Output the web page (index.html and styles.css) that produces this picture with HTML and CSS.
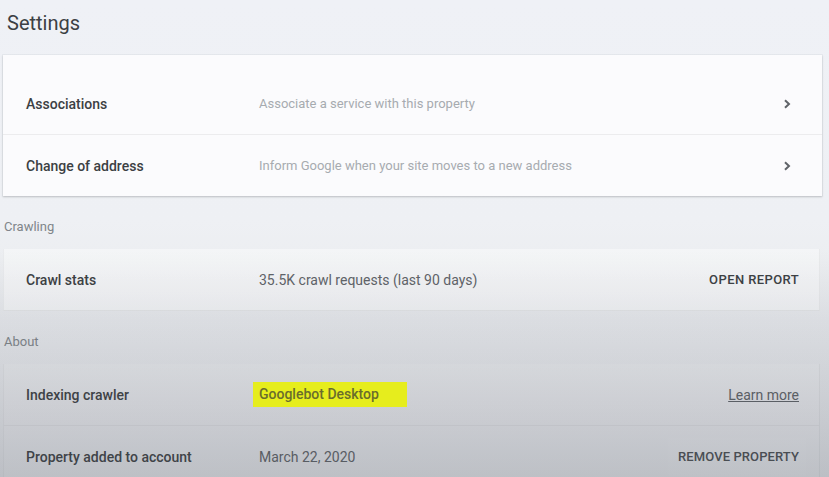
FILE: index.html
```html
<!DOCTYPE html>
<html lang="en">
<head>
<meta charset="utf-8">
<title>Settings</title>
<link rel="stylesheet" href="styles.css">
</head>
<body>
<main class="page">
  <h1 class="title">Settings</h1>

  <section class="card card-main">
    <div class="row">
      <div class="label">Associations</div>
      <div class="value muted">Associate a service with this property</div>
      <div class="action">
        <svg class="chev" width="8" height="10" viewBox="0 0 8 10"><path d="M2 1.2 L6 5 L2 8.8" fill="none" stroke="#5f6368" stroke-width="2"/></svg>
      </div>
    </div>
    <div class="row divided">
      <div class="label">Change of address</div>
      <div class="value muted">Inform Google when your site moves to a new address</div>
      <div class="action">
        <svg class="chev" width="8" height="10" viewBox="0 0 8 10"><path d="M2 1.2 L6 5 L2 8.8" fill="none" stroke="#5f6368" stroke-width="2"/></svg>
      </div>
    </div>
  </section>

  <h2 class="section-label">Crawling</h2>
  <section class="card card-soft">
    <div class="row">
      <div class="label">Crawl stats</div>
      <div class="value">35.5K crawl requests (last 90 days)</div>
      <div class="action"><span class="btn-text">OPEN REPORT</span></div>
    </div>
  </section>

  <h2 class="section-label">About</h2>
  <section class="card card-soft card-about">
    <div class="row">
      <div class="label">Indexing crawler</div>
      <div class="value"><span class="highlight">Googlebot Desktop</span></div>
      <div class="action"><a class="link" href="#">Learn more</a></div>
    </div>
    <div class="row divided divided-faint">
      <div class="label">Property added to account</div>
      <div class="value">March 22, 2020</div>
      <div class="action"><span class="btn-text btn-remove">REMOVE PROPERTY</span></div>
    </div>
  </section>
</main>
</body>
</html>
```

FILE: styles.css
```css
html, body {
  margin: 0;
  padding: 0;
}

body {
  width: 829px;
  height: 477px;
  overflow: hidden;
  position: relative;
  font-family: Roboto, "Liberation Sans", Arial, sans-serif;
  color: #3c4043;
  background: linear-gradient(to bottom, #eff1f6 0px, #eef0f4 220px, #eceef1 260px, #e6e8ec 320px, #eceef2 477px);
}

/* video-like darkening that lies over the lower half of the page */
body::after {
  content: "";
  position: absolute;
  left: 0;
  top: 0;
  width: 100%;
  height: 100%;
  pointer-events: none;
  background: linear-gradient(to bottom,
    rgba(70, 75, 85, 0) 0px,
    rgba(70, 75, 85, 0) 250px,
    rgba(70, 75, 85, 0.07) 320px,
    rgba(70, 75, 85, 0.17) 390px,
    rgba(70, 75, 85, 0.29) 477px);
}

.page {
  display: flex;
  flex-direction: column;
  padding: 0 7px 0 3px;
}

.title {
  margin: 11px 0 20px 4px;
  font-size: 20px;
  line-height: 24px;
  font-weight: 400;
  color: #3c4043;
}

.section-label {
  margin: 22px 0 13px 1px;
  font-size: 13px;
  line-height: 18px;
  font-weight: 400;
  color: #80858a;
}

.card {
  display: flex;
  flex-direction: column;
}

.card-main {
  background: #fbfbfd;
  padding-top: 18px;
  box-shadow: 0 1px 2px rgba(60, 64, 67, 0.25), 0 0 0 1px rgba(60, 64, 67, 0.04);
}

.card-soft {
  margin-right: 2px;
  background: rgba(255, 255, 255, 0.4);
  border-left: 1px solid rgba(60, 64, 67, 0.05);
  border-right: 1px solid rgba(60, 64, 67, 0.06);
  border-bottom: 1px solid rgba(60, 64, 67, 0.07);
}

.card-about {
  background: rgba(255, 255, 255, 0.14);
  border-bottom: none;
}

.row {
  display: flex;
  align-items: center;
  height: 61px;
  padding: 0 31px 0 23px;
}

.row.divided {
  border-top: 1px solid rgba(60, 64, 67, 0.08);
}

.row.divided-faint {
  border-top-color: rgba(60, 64, 67, 0.05);
}

.card-soft .row {
  padding-right: 20px;
  padding-left: 22px;
}

.label {
  width: 233px;
  flex: none;
  font-size: 14px;
  font-weight: 500;
  color: #3c4043;
}

.value {
  flex: 1;
  font-size: 14px;
  color: #5f6368;
}

.value.muted {
  font-size: 13px;
  color: #a7abb0;
}

.action {
  display: flex;
  align-items: center;
  justify-content: flex-end;
}

.chev {
  display: block;
}

.btn-text {
  font-size: 13px;
  font-weight: 500;
  letter-spacing: 0.4px;
  color: #3c4043;
}

.btn-remove {
  display: flex;
  align-items: center;
  height: 38px;
  padding: 0 7px 0 10px;
  margin-right: -7px;
  letter-spacing: 0.1px;
  background: rgba(255, 255, 255, 0.1);
  color: #4a4e52;
}

/* marker highlight sits above the darkening overlay */
.highlight {
  position: relative;
  z-index: 1;
  display: inline-block;
  margin-left: -6px;
  padding: 4px 28px 4px 6px;
  line-height: 17px;
  background: #e6ed1d;
  color: #6a6d2c;
  font-weight: 500;
}

.link {
  font-size: 14px;
  color: #5f6368;
  text-decoration: underline;
}
```
